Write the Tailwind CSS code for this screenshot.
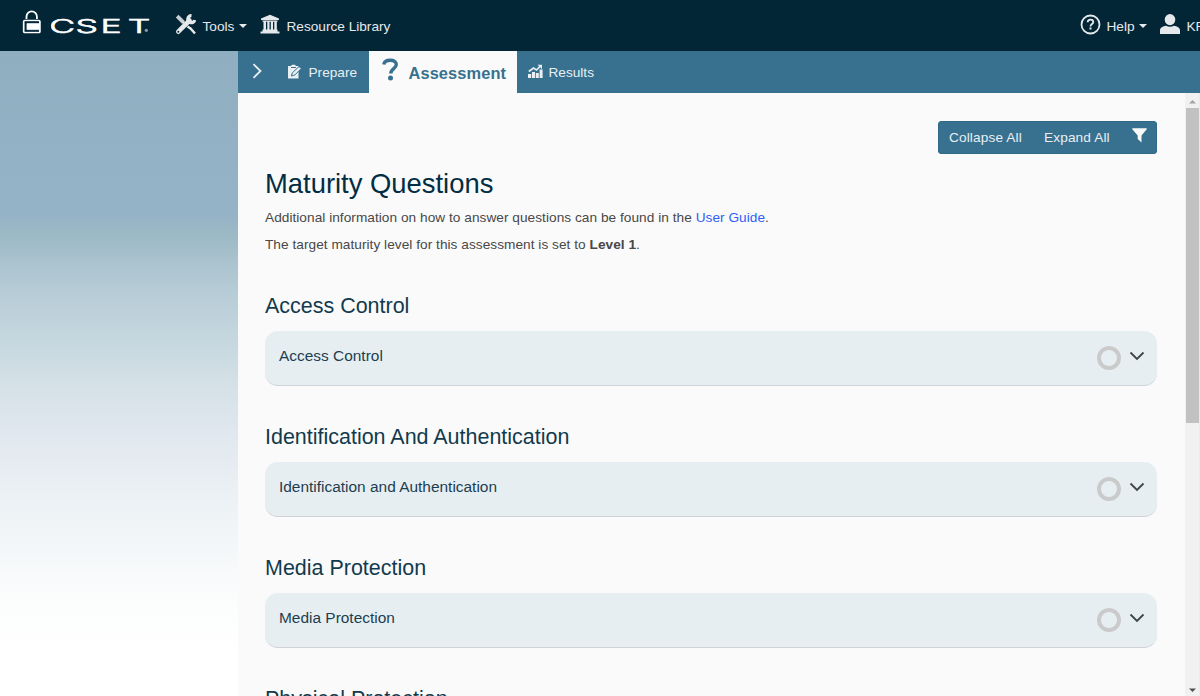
<!DOCTYPE html>
<html lang="en">
<head>
<meta charset="utf-8">
<title>CSET</title>
<script src="https://cdn.jsdelivr.net/npm/@tailwindcss/browser@4"></script>
</head>
<body class="flex h-[696px] w-[1200px] flex-col overflow-hidden bg-[#fafafa] font-['Liberation_Sans',Arial,sans-serif] text-[13.65px] leading-5 text-[#484848]">
<header class="flex h-[51px] shrink-0 bg-[#032637] text-[#e6e9eb]">
  <svg class="ml-[22px] mt-[10px] h-[24px] w-[19px] shrink-0" viewBox="0 0 19 24" fill="none" stroke="#fff">
    <path d="M4.500 9V6.500a5 5 0 0 1 10.400 0V9" stroke-width="1.800"/>
    <rect x="1.700" y="10.500" width="16.200" height="12" rx="1" stroke-width="1.700"/>
    <path d="M17.500 13.500H5v6.200H17.500" stroke="#fff" stroke-width=".8"/>
    <path d="M5 14h12.500v5.500H5z" fill="#fff" stroke="none"/>
    <path d="M2.800 12.200h14M3.500 12v9M2.800 20.900h14" stroke="#032637" stroke-width="1"/>
  </svg>
  <svg class="ml-[10px] mt-[15px] h-[24px] w-[104px] shrink-0" viewBox="0 0 104 24" fill="#fff">
    <text transform="scale(1.850 1)" x="-1 13.200 26.700 41.500" y="17.800" font-family="Inter, sans-serif" font-size="19.200" font-weight="300" stroke="#fff" stroke-width=".6">CSET</text>
    <circle cx="95.300" cy="15.300" r="1.600" fill="#8b9ba5"/>
  </svg>
  <svg class="ml-[20px] mt-[14px] h-[21px] w-[21px] shrink-0" viewBox="0 0 21 21" fill="none" stroke="#e6e9eb">
    <path d="M.8 3.500 3.500.8 10 7.200 7.300 9.900z" fill="#c8ced2" stroke="none"/>
    <path d="M8 8l4 4" stroke-width="1.500"/>
    <path d="M12.500 12.500l3 2 4.500 5" stroke-width="2.400"/>
    <path d="M3.300 17.700 14.500 6.500" stroke-width="4.600" stroke-linecap="round"/>
    <path d="M16.500 1.700a3.500 3.500 0 1 0 3.200 4.300" stroke-width="3.200"/>
    <circle cx="3.300" cy="17.700" r="1" fill="#032637" stroke="none"/>
  </svg>
  <span class="ml-[6.500px] mt-[17px] w-[36px]">Tools</span>
  <svg class="mt-[24px] h-[5px] w-[8px]" viewBox="0 0 8 5" fill="#e6e9eb"><path d="M0 0h8L4 4z"/></svg>
  <svg class="ml-[13.500px] mt-[14px] h-[21px] w-[20px]" viewBox="0 0 20 21" fill="#e6e9eb"><path d="M10 .8 19 4.500V6H1V4.500zM2.500 6.500h15v1.200h-15zM3.500 7.500h2.500v8.500H3.500zM7.300 7.500h2.200v8.500H7.300zM10.800 7.500H13v8.500h-2.200zM14.300 7.500h2.500v8.500h-2.500zM2.500 15.600h15v2h-15zM.5 17.600h19v1.800H.5z"/></svg>
  <span class="ml-[6.500px] mt-[17px] whitespace-nowrap">Resource Library</span>
  <div class="ml-auto flex w-[120px] shrink-0 overflow-hidden">
    <svg class="mt-[14px] h-[21px] w-[21px] shrink-0" viewBox="0 0 21 21" fill="none" stroke="#e6e9eb"><circle cx="10.500" cy="10.500" r="9" stroke-width="1.800"/><path d="M7.700 8.300c0-1.800 1.200-2.700 2.800-2.700s2.800 1 2.800 2.500c0 2-2.800 2-2.800 4.300" stroke-width="1.800"/><path d="M10.500 13.500v2" stroke-width="2"/></svg>
    <span class="ml-[5.500px] mt-[17px] w-[32.500px] shrink-0">Help</span>
    <svg class="mt-[24px] h-[5px] w-[8px] shrink-0" viewBox="0 0 8 5" fill="#e6e9eb"><path d="M0 0h8L4 4z"/></svg>
    <svg class="ml-[13px] mt-[14px] h-[20px] w-[20px] shrink-0" viewBox="0 0 20 20" fill="#e6e9eb"><ellipse cx="10" cy="5.600" rx="5.300" ry="5.600"/><path d="M0 20v-3.500c0-3 3-4.300 6-4.800 2.500 1.500 5.500 1.500 8 0 3 .5 6 1.800 6 4.800V20z"/></svg>
    <span class="ml-[6.500px] mt-[17px] whitespace-nowrap">KR</span>
  </div>
</header>
<div class="flex min-h-0 flex-1">
  <aside class="w-[238px] shrink-0 bg-[linear-gradient(to_bottom,#8fafc1_0%,#95b3c6_25.500%,#9bb9c5_28.500%,#abc4cf_33%,#b8cdd7_38%,#c6d7df_45%,#d3e0e6_51%,#e0e7ee_59%,#e9eff3_67%,#f4f7f9_77%,#fcfdfd_86%,#fff_93%)]"></aside>
  <div class="flex min-w-0 flex-1 flex-col">
    <nav class="flex h-[42px] shrink-0 bg-[#37718f] text-[#e9eff3]">
      <svg class="ml-[14px] mt-[12px] h-[16px] w-[11px] shrink-0" viewBox="0 0 11 16" fill="none" stroke="#e9eff3" stroke-width="1.800"><path d="M1.500 1.200 8.500 8l-7 6.800"/></svg>
      <svg class="ml-[24px] mt-[13px] h-[16px] w-[16px] shrink-0" viewBox="0 0 16 16"><path d="M1 2H4L5 .8h3L9 2h2.500v12.500H1z" fill="#e9eff3"/><path d="M4 3.500h5" stroke="#37718f" stroke-width="1"/><path d="M4.500 12l.7-3L12 2.500l2.300 2L7.800 11z" fill="#e9eff3" stroke="#37718f" stroke-width="1"/></svg>
      <span class="ml-[5.500px] mt-[12px] w-[60px]">Prepare</span>
      <div class="flex w-[148.500px] bg-[#fafafa] text-[#37718f]">
        <svg class="ml-[13.500px] mt-[7px] h-[24px] w-[17px] shrink-0" viewBox="0 0 17 24" fill="none" stroke="#37718f"><path d="M1.800 6.500C2.200 3.500 5 2.200 8.300 2.200c3.500 0 6 1.600 6 4.400 0 4.200-5.500 4-5.500 9" stroke-width="3.400"/><circle cx="8.500" cy="20" r="2.500" fill="#37718f" stroke="none"/></svg>
        <span class="ml-[9.500px] mt-[12px] text-[16.400px] font-bold tracking-[0.1px]">Assessment</span>
      </div>
      <svg class="ml-[11px] mt-[13px] h-[15px] w-[15px] shrink-0" viewBox="0 0 15 15" fill="#e9eff3"><path d="M0 10h3.200v4H0zM4 8h3v6H4zM7.800 9h3v5h-3zM11.600 5.500h3V14h-3z"/><path d="M.8 7.500 5.500 4l3 2L12.500 2" stroke="#e9eff3" stroke-width="1.700" fill="none"/><path d="M9.500.8H14v4.500z"/></svg>
      <span class="ml-[5.500px] mt-[12px] text-[13.650px]">Results</span>
    </nav>
    <div class="flex min-h-0 flex-1">
      <main class="w-[947px] overflow-hidden pl-[27px] pr-[28px] pt-[28px]">
        <div class="ml-auto flex h-[33px] w-[219px] rounded-[3px] border border-[#2f6a89] bg-[#37718f] text-[13.650px] tracking-[0.13px] text-[#e9eff3]">
          <span class="ml-[10px] w-[73px] mt-[6px] whitespace-nowrap">Collapse All</span>
          <span class="ml-[22px] w-[66px] mt-[6px] whitespace-nowrap">Expand All</span>
          <svg class="ml-[22px] mt-[6px] h-[15px] w-[15px]" viewBox="0 0 15 15" fill="#fafafa"><path d="M.3.300h14.400v1L9.500 7.500v7L5.700 11V7.500L.3 1.300z"/></svg>
        </div>
        <h1 class="mt-[12px] text-[27.400px] leading-9 text-[#032d42]">Maturity Questions</h1>
        <p class="mt-[6px] tracking-[0.042px]">Additional information on how to answer questions can be found in the <a class="text-[#2f5ff5]">User Guide</a>.</p>
        <p class="mt-[7px] tracking-[0.042px]">The target maturity level for this assessment is set to <b>Level 1</b>.</p>
        <section class="mt-[36px] h-[131px]">
          <h2 class="text-[21.470px] leading-[30px] text-[#123a4d]">Access Control</h2>
          <div class="mt-[10px] flex h-[55px] rounded-[13px] border-b border-[#cfd3d5] bg-[#e7eef2] pl-[14px] text-[15.440px] text-[#1c3e50]"><span class="mt-[15px]">Access Control</span>
            <span class="ml-auto mt-[15px] size-6 rounded-full border-4 border-[#cacaca]"></span>
            <svg class="ml-[7.500px] mr-[12.500px] mt-[20px] h-[10px] w-[16px]" viewBox="0 0 16 10" fill="none" stroke="#3e4549" stroke-width="1.800"><path d="M1.500 1.500 8 8l6.500-6.500"/></svg>
          </div>
        </section>
        <section class="h-[131px]">
          <h2 class="text-[21.470px] leading-[30px] text-[#123a4d]">Identification And Authentication</h2>
          <div class="mt-[10px] flex h-[55px] rounded-[13px] border-b border-[#cfd3d5] bg-[#e7eef2] pl-[14px] text-[15.440px] text-[#1c3e50]"><span class="mt-[15px]">Identification and Authentication</span>
            <span class="ml-auto mt-[15px] size-6 rounded-full border-4 border-[#cacaca]"></span>
            <svg class="ml-[7.500px] mr-[12.500px] mt-[20px] h-[10px] w-[16px]" viewBox="0 0 16 10" fill="none" stroke="#3e4549" stroke-width="1.800"><path d="M1.500 1.500 8 8l6.500-6.500"/></svg>
          </div>
        </section>
        <section class="h-[131px]">
          <h2 class="text-[21.470px] leading-[30px] text-[#123a4d]">Media Protection</h2>
          <div class="mt-[10px] flex h-[55px] rounded-[13px] border-b border-[#cfd3d5] bg-[#e7eef2] pl-[14px] text-[15.440px] text-[#1c3e50]"><span class="mt-[15px]">Media Protection</span>
            <span class="ml-auto mt-[15px] size-6 rounded-full border-4 border-[#cacaca]"></span>
            <svg class="ml-[7.500px] mr-[12.500px] mt-[20px] h-[10px] w-[16px]" viewBox="0 0 16 10" fill="none" stroke="#3e4549" stroke-width="1.800"><path d="M1.500 1.500 8 8l6.500-6.500"/></svg>
          </div>
        </section>
        <h2 class="text-[21.470px] leading-[30px] text-[#123a4d]">Physical Protection</h2>
      </main>
      <div class="flex w-[14px] flex-col items-center bg-[#f1f1f1]">
        <svg class="mt-[6px] h-[5px] w-[7px]" viewBox="0 0 7 5" fill="#a3a3a3"><path d="M0 4.500h7L3.500 1z"/></svg>
        <div class="mt-[4px] h-[315px] w-[13px] bg-[#c1c1c1]"></div>
        <svg class="mb-[3px] mt-auto h-[5px] w-[7px]" viewBox="0 0 7 5" fill="#505050"><path d="M0 .5h7L3.500 4z"/></svg>
      </div>
      <div class="w-px bg-[#e3ecf0]"></div>
    </div>
  </div>
</div>
</body>
</html>
